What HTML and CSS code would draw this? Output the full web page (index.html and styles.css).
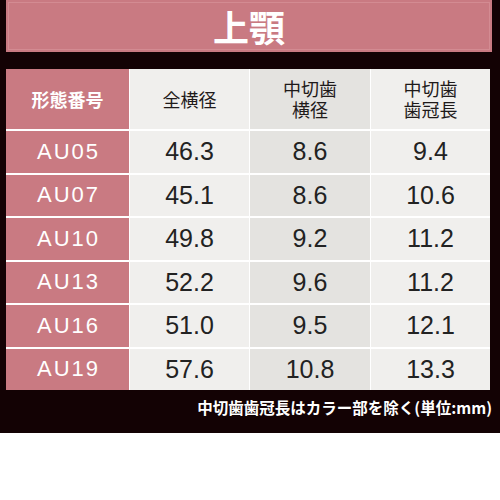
FILE: index.html
```html
<!DOCTYPE html>
<html lang="ja">
<head>
<meta charset="utf-8">
<title>上顎</title>
<link rel="stylesheet" href="styles.css">
</head>
<body>
<div class="board">
  <div class="title">上顎</div>
  <div class="table">
    <div class="cell key head">形態番号</div>
    <div class="cell light head">全横径</div>
    <div class="cell dark head">中切歯<br>横径</div>
    <div class="cell light head">中切歯<br>歯冠長</div>

    <div class="cell key">AU05</div>
    <div class="cell light num">46.3</div>
    <div class="cell dark num">8.6</div>
    <div class="cell light num">9.4</div>

    <div class="cell key">AU07</div>
    <div class="cell light num">45.1</div>
    <div class="cell dark num">8.6</div>
    <div class="cell light num">10.6</div>

    <div class="cell key">AU10</div>
    <div class="cell light num">49.8</div>
    <div class="cell dark num">9.2</div>
    <div class="cell light num">11.2</div>

    <div class="cell key">AU13</div>
    <div class="cell light num">52.2</div>
    <div class="cell dark num">9.6</div>
    <div class="cell light num">11.2</div>

    <div class="cell key">AU16</div>
    <div class="cell light num">51.0</div>
    <div class="cell dark num">9.5</div>
    <div class="cell light num">12.1</div>

    <div class="cell key">AU19</div>
    <div class="cell light num">57.6</div>
    <div class="cell dark num">10.8</div>
    <div class="cell light num">13.3</div>
  </div>
  <p class="note">中切歯歯冠長はカラー部を除く(単位:mm)</p>
</div>
</body>
</html>
```

FILE: styles.css
```css
html, body {
  margin: 0;
  padding: 0;
  background: #ffffff;
}

.board {
  background: #130204;
  width: 500px;
  height: 433px;
  box-sizing: border-box;
  padding: 0 10px 0 6px;
  display: flex;
  flex-direction: column;
}

.title {
  height: 52px;
  width: 486px;
  background: #c97a82;
  box-shadow: inset 0 0 0 2px #c97a82, inset 0 0 0 3px #d38b92;
  color: #ffffff;
  font-family: "Noto Sans CJK JP", sans-serif;
  font-weight: 700;
  font-size: 36px;
  line-height: 52px;
  text-align: center;
}

.table {
  margin-top: 17px;
  width: 484px;
  display: grid;
  grid-template-columns: 123px 119px 120px 119px;
  grid-template-rows: 60px repeat(6, 41.5px);
  column-gap: 1px;
  row-gap: 2px;
  background: #ffffff;
}

.cell {
  display: flex;
  align-items: center;
  justify-content: center;
  text-align: center;
}

.key {
  background: #c97a82;
  color: #ffffff;
  font-family: "Liberation Sans", Arial, sans-serif;
  font-size: 22px;
  letter-spacing: 2px;
  padding-left: 2px;
}

.light {
  background: #f0efed;
}

.dark {
  background: #e4e3e0;
}

.head {
  font-family: "Noto Sans CJK JP", sans-serif;
  font-size: 18px;
  line-height: 21px;
  color: #1e1a1a;
  letter-spacing: 0;
}

.key.head {
  color: #ffffff;
  font-weight: 700;
  font-size: 18px;
  padding-left: 0;
}

.num {
  font-family: "Liberation Sans", Arial, sans-serif;
  font-size: 25px;
  color: #222222;
}

.note {
  margin: 7px 0 0 0;
  width: 486px;
  text-align: right;
  color: #ffffff;
  font-family: "Noto Sans CJK JP", sans-serif;
  font-weight: 700;
  font-size: 15.5px;
  line-height: 20px;
}
```
